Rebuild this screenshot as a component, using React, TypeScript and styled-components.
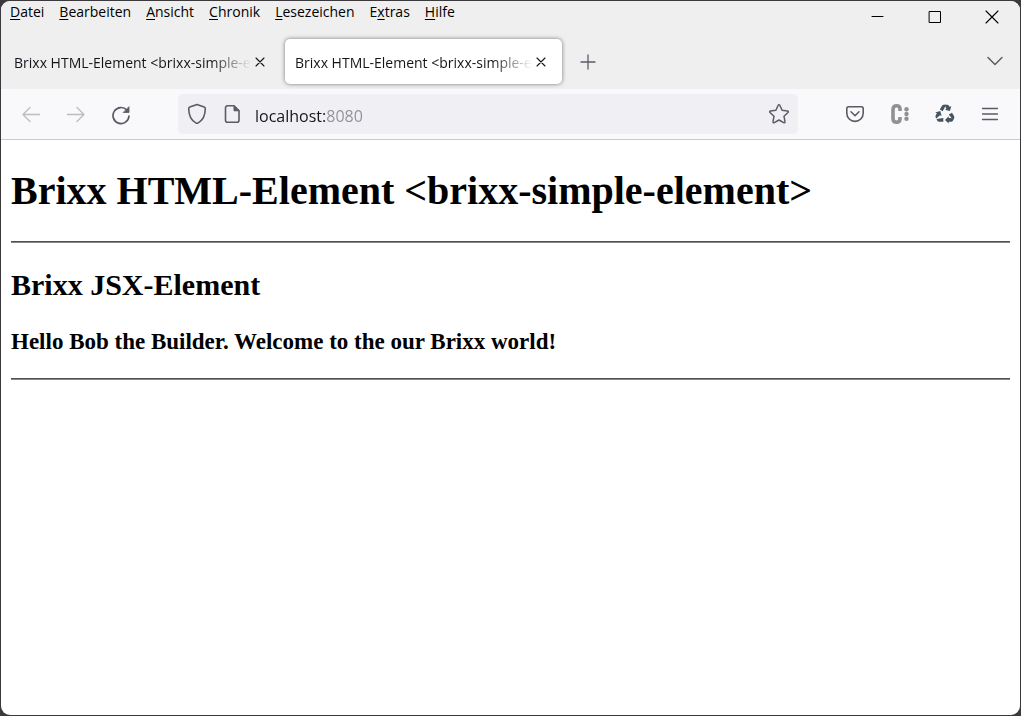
import React from "react";
import styled, { createGlobalStyle, css } from "styled-components";

const GlobalStyle = createGlobalStyle`
  *, *::before, *::after { box-sizing: border-box; }
  body { margin: 0; background: #3b393c; }
  button { border: 0; padding: 0; background: none; color: inherit; font: inherit; }
`;

const uiFont = css`
  font-family: "Open Sans", "Noto Sans", sans-serif;
`;

const Desktop = styled.div`
  display: flex;
  min-height: 100vh;
  padding: 1px;
  background: #3b393c;
`;

const BrowserWindow = styled.div`
  display: flex;
  flex: 1;
  flex-direction: column;
  min-width: 0;
  overflow: hidden;
  border-radius: 9px;
  background: #fff;
`;

const TitleBar = styled.header`
  display: flex;
  align-items: flex-start;
  justify-content: space-between;
  height: 32px;
  background: #efefef;
`;

const MenuBar = styled.nav`
  ${uiFont}
  display: flex;
  gap: 15px;
  padding-left: 9px;
  font-size: 14px;
  line-height: 22px;
  color: #000;
`;

const MenuButton = styled.button`
  white-space: nowrap;
`;

const AccessKey = styled.span`
  text-decoration: underline;
  text-underline-offset: 2px;
`;

const WindowControls = styled.div`
  display: flex;
`;

const WindowButton = styled.button`
  display: grid;
  place-items: center;
  width: 57px;
  height: 31px;
  color: #000;
`;

const TabStrip = styled.div`
  ${uiFont}
  display: flex;
  align-items: center;
  gap: 4px;
  height: 56px;
  padding: 6px 7px 5px 3px;
  background: #efefef;
  font-size: 14px;
  color: #15141a;
`;

const Tab = styled.div<{ $active?: boolean }>`
  display: flex;
  align-items: center;
  width: 277px;
  height: 45px;
  padding: 0 12px 0 10px;
  border-radius: 5px;
  ${({ $active }) =>
    $active &&
    css`
      background: #fff;
      box-shadow: 0 0 4px rgba(0, 0, 0, 0.5);
    `}
`;

const TabLabel = styled.button`
  flex: 1;
  min-width: 0;
  padding-top: 2px;
  overflow: hidden;
  line-height: 24px;
  text-align: left;
  white-space: nowrap;
  mask-image: linear-gradient(to left, transparent, #000 40px);
`;

const TabClose = styled.button`
  display: grid;
  place-items: center;
  width: 18px;
  height: 20px;
`;

const StripButton = styled.button<{ $end?: boolean }>`
  display: grid;
  place-items: center;
  width: 36px;
  height: 36px;
  margin-left: ${({ $end }) => ($end ? "auto" : "4px")};
  color: #5b5b66;
`;

const Toolbar = styled.div`
  display: flex;
  align-items: center;
  height: 51px;
  padding: 0 8px 0 7px;
  border-bottom: 1px solid #ccc;
  background: #f9f9fb;
`;

const ToolButton = styled.button`
  display: grid;
  place-items: center;
  width: 45px;
  height: 40px;
  color: #5b5b66;

  &:disabled {
    color: #bdbdc3;
  }
`;

const AddressBar = styled.div`
  display: flex;
  flex: 1;
  align-items: center;
  min-width: 0;
  height: 40px;
  margin: 0 34px 0 35px;
  padding: 0 1px;
  border-radius: 5px;
  background: #f0f0f4;
`;

const AddressButton = styled.button`
  display: grid;
  flex: none;
  place-items: center;
  width: 36px;
  height: 40px;
  color: #5b5b66;
`;

const AddressInput = styled.input`
  ${uiFont}
  flex: 1;
  min-width: 0;
  height: 28px;
  margin-left: 4px;
  padding: 4px 0 0;
  border: 0;
  outline: 0;
  font-size: 16px;
  line-height: 24px;
  color: transparent;
  background: linear-gradient(to right, #15141a 70px, #8f8f98 70px);
  background-clip: text;
  -webkit-background-clip: text;
`;

const Page = styled.main`
  flex: 1;
  padding: 28px 10px;
  font-family: "Liberation Serif", "Times New Roman", serif;
  color: #000;
`;

const Title = styled.h1`
  margin: 0 0 27px;
  font-size: 40px;
  line-height: 46px;
`;

const Subtitle = styled.h2`
  margin: 25px 0;
  font-size: 30px;
  line-height: 34px;
`;

const Greeting = styled.h3`
  margin: 26px 0 22px;
  font-size: 23px;
  line-height: 28px;
`;

const Rule = styled.hr`
  height: 2px;
  margin: 0;
  border: 0;
  border-top: 1px solid #505050;
  border-bottom: 1px solid #858585;
`;

const Stroke = styled.svg`
  display: block;
  fill: none;
  stroke: currentColor;
  stroke-linecap: round;
  stroke-linejoin: round;
`;

const menuItems = [
  ["", "D", "atei"],
  ["", "B", "earbeiten"],
  ["", "A", "nsicht"],
  ["", "C", "hronik"],
  ["", "L", "esezeichen"],
  ["E", "x", "tras"],
  ["", "H", "ilfe"],
];

const tabs = [
  { id: 1, active: false },
  { id: 2, active: true },
];

const CloseIcon = ({ size }: { size: number }) => (
  <Stroke width={size} height={size} viewBox={`0 0 ${size} ${size}`} strokeWidth="1.1">
    <path d={`M1 1L${size - 1} ${size - 1}M${size - 1} 1L1 ${size - 1}`} />
  </Stroke>
);

const MinimizeIcon = () => (
  <Stroke width="13" height="13" viewBox="0 0 13 13" strokeLinecap="butt">
    <path d="M1 6.5h11" />
  </Stroke>
);

const MaximizeIcon = () => (
  <Stroke width="13" height="13" viewBox="0 0 13 13">
    <path d="M1.500 1.500h11v11h-11z" style={{ strokeLinejoin: "miter" }} />
  </Stroke>
);

const PlusIcon = () => (
  <Stroke width="16" height="16" viewBox="0 0 16 16" strokeWidth="1.3">
    <path d="M8 1v14M1 8h14" />
  </Stroke>
);

const ChevronIcon = () => (
  <Stroke width="18" height="18" viewBox="0 0 18 18" strokeWidth="1.5">
    <path d="M2 4.5l7 7 7-7" />
  </Stroke>
);

const BackIcon = () => (
  <Stroke width="20" height="18" viewBox="0 0 20 18" strokeWidth="1.4">
    <path d="M18.5 9.500H2M9 2.500L2 9.500l7 7" />
  </Stroke>
);

const ForwardIcon = () => (
  <Stroke width="20" height="18" viewBox="0 0 20 18" strokeWidth="1.4">
    <path d="M1.500 9.500H18M11 2.500l7 7-7 7" />
  </Stroke>
);

const ReloadIcon = () => (
  <Stroke width="20" height="22" viewBox="0 0 20 22" strokeWidth="1.7">
    <path d="M16 7.200A8 8 0 1 0 18 13" />
    <path d="M18 4v5.500h-5.500z" fill="currentColor" strokeWidth="0.8" />
  </Stroke>
);

const ShieldIcon = () => (
  <Stroke width="20" height="22" viewBox="0 0 20 22" strokeWidth="1.6">
    <path d="M10 1.500l7.200 2.600c.7.300 1.100.8 1.100 1.500 0 6.500-2.100 11.500-7.100 14.300-.8.500-1.600.5-2.400 0C3.800 17.100 1.700 12.100 1.700 5.600c0-.7.400-1.200 1.100-1.500z" />
  </Stroke>
);

const PageIcon = () => (
  <Stroke width="20" height="20" viewBox="0 0 20 20" strokeWidth="1.6">
    <path d="M4.500 1.800h6.500l5 5v9.400a2 2 0 0 1-2 2H4.500a2 2 0 0 1-2-2V3.800a2 2 0 0 1 2-2z" />
    <path d="M11 2v4.800h4.800z" fill="currentColor" strokeWidth="1" />
  </Stroke>
);

const StarIcon = () => (
  <Stroke width="22" height="22" viewBox="0 0 22 22" strokeWidth="1.5">
    <path d="M10.200 2.200c.3-.7 1.300-.7 1.600 0l2.300 5 5.400.7c.8.100 1.100 1 .5 1.600l-4 3.800 1 5.400c.2.8-.6 1.400-1.300 1L11 17l-4.700 2.700c-.7.400-1.500-.2-1.300-1l1-5.400-4-3.800c-.6-.6-.3-1.500.5-1.600l5.400-.7z" />
  </Stroke>
);

const PocketIcon = () => (
  <Stroke width="20" height="18" viewBox="0 0 20 18" strokeWidth="1.6">
    <path d="M3.500 1.800h13c1 0 1.700.7 1.700 1.700v4.700a8.200 8.200 0 0 1-16.400 0V3.500c0-1 .7-1.700 1.700-1.700z" />
    <path d="M6 6.800l4 3.900 4-3.900" />
  </Stroke>
);

const ColonIcon = () => (
  <svg width="20" height="20" viewBox="0 0 20 20">
    <path
      d="M10 7V5q0-3.200-3.500-3.200T3 5.500v9q0 3.700 3.500 3.700T10 15v-2"
      fill="none"
      stroke="#919191"
      strokeWidth="3.600"
    />
    <g fill="#919191">
      <circle cx="16.500" cy="5.300" r="2.200" />
      <circle cx="16.500" cy="10" r="2.200" />
      <circle cx="16.500" cy="14.700" r="2.200" />
    </g>
  </svg>
);

const RecycleIcon = () => (
  <svg width="20" height="20" viewBox="0 0 20 20">
    <g fill="#47535f">
      <path d="M4.800 5.600L7 1.800Q7.600.7 8.800.7h2.400L7.700 7.300z" />
      <path d="M9.600.7h2.600q1.200 0 1.800 1l.8 1.300 1.600-.9-1.500 5-5-1.300 1.500-.9z" />
      <path d="M13.800 10.600l3.200-1.900 2 3.400q.7 1.200 0 2.400l-.9 1.500z" />
      <path d="M18.600 15.500l-.7 1.200q-.6 1-1.800 1h-2.400v1.900l-3.700-3.700 3.700-3.700v1.900h2.500z" />
      <path d="M8.300 13.900v3.800H4.200q-1.200 0-1.800-1l-.9-1.600z" />
      <path d="M1.200 14.500l-.5-.9q-.6-1.100 0-2.200l1.200-2.100-1.600-.9 5-1.300 1.300 5-1.600-.9z" />
    </g>
  </svg>
);

const BurgerIcon = () => (
  <Stroke width="18" height="16" viewBox="0 0 18 16" strokeWidth="1.300">
    <path d="M1.500 2.500h15M1.500 8h15M1.500 13.500h15" />
  </Stroke>
);

export default function App() {
  return (
    <Desktop>
      <GlobalStyle />
      <BrowserWindow>
        <TitleBar>
          <MenuBar>
            {menuItems.map(([before, key, after]) => (
              <MenuButton key={before + key + after}>
                {before}
                <AccessKey>{key}</AccessKey>
                {after}
              </MenuButton>
            ))}
          </MenuBar>
          <WindowControls>
            <WindowButton aria-label="Minimieren"><MinimizeIcon /></WindowButton>
            <WindowButton aria-label="Maximieren"><MaximizeIcon /></WindowButton>
            <WindowButton aria-label="Schließen"><CloseIcon size={14} /></WindowButton>
          </WindowControls>
        </TitleBar>

        <TabStrip>
          {tabs.map(({ id, active }) => (
            <Tab key={id} $active={active}>
              <TabLabel>Brixx HTML-Element &lt;brixx-simple-element&gt;</TabLabel>
              <TabClose aria-label="Tab schließen"><CloseIcon size={10} /></TabClose>
            </Tab>
          ))}
          <StripButton aria-label="Neuer Tab"><PlusIcon /></StripButton>
          <StripButton $end aria-label="Alle Tabs auflisten"><ChevronIcon /></StripButton>
        </TabStrip>

        <Toolbar>
          <ToolButton disabled aria-label="Zurück"><BackIcon /></ToolButton>
          <ToolButton disabled aria-label="Vor"><ForwardIcon /></ToolButton>
          <ToolButton aria-label="Neu laden"><ReloadIcon /></ToolButton>
          <AddressBar>
            <AddressButton aria-label="Schutz"><ShieldIcon /></AddressButton>
            <AddressButton aria-label="Seiteninformationen"><PageIcon /></AddressButton>
            <AddressInput aria-label="Adresse" defaultValue="localhost:8080" spellCheck={false} />
            <AddressButton aria-label="Lesezeichen hinzufügen"><StarIcon /></AddressButton>
          </AddressBar>
          <ToolButton aria-label="Pocket"><PocketIcon /></ToolButton>
          <ToolButton aria-label="Erweiterung"><ColonIcon /></ToolButton>
          <ToolButton aria-label="Recycling"><RecycleIcon /></ToolButton>
          <ToolButton aria-label="Menü"><BurgerIcon /></ToolButton>
        </Toolbar>

        <Page>
          <Title>Brixx HTML-Element &lt;brixx-simple-element&gt;</Title>
          <Rule />
          <Subtitle>Brixx JSX-Element</Subtitle>
          <Greeting>Hello Bob the Builder. Welcome to the our Brixx world!</Greeting>
          <Rule />
        </Page>
      </BrowserWindow>
    </Desktop>
  );
}
